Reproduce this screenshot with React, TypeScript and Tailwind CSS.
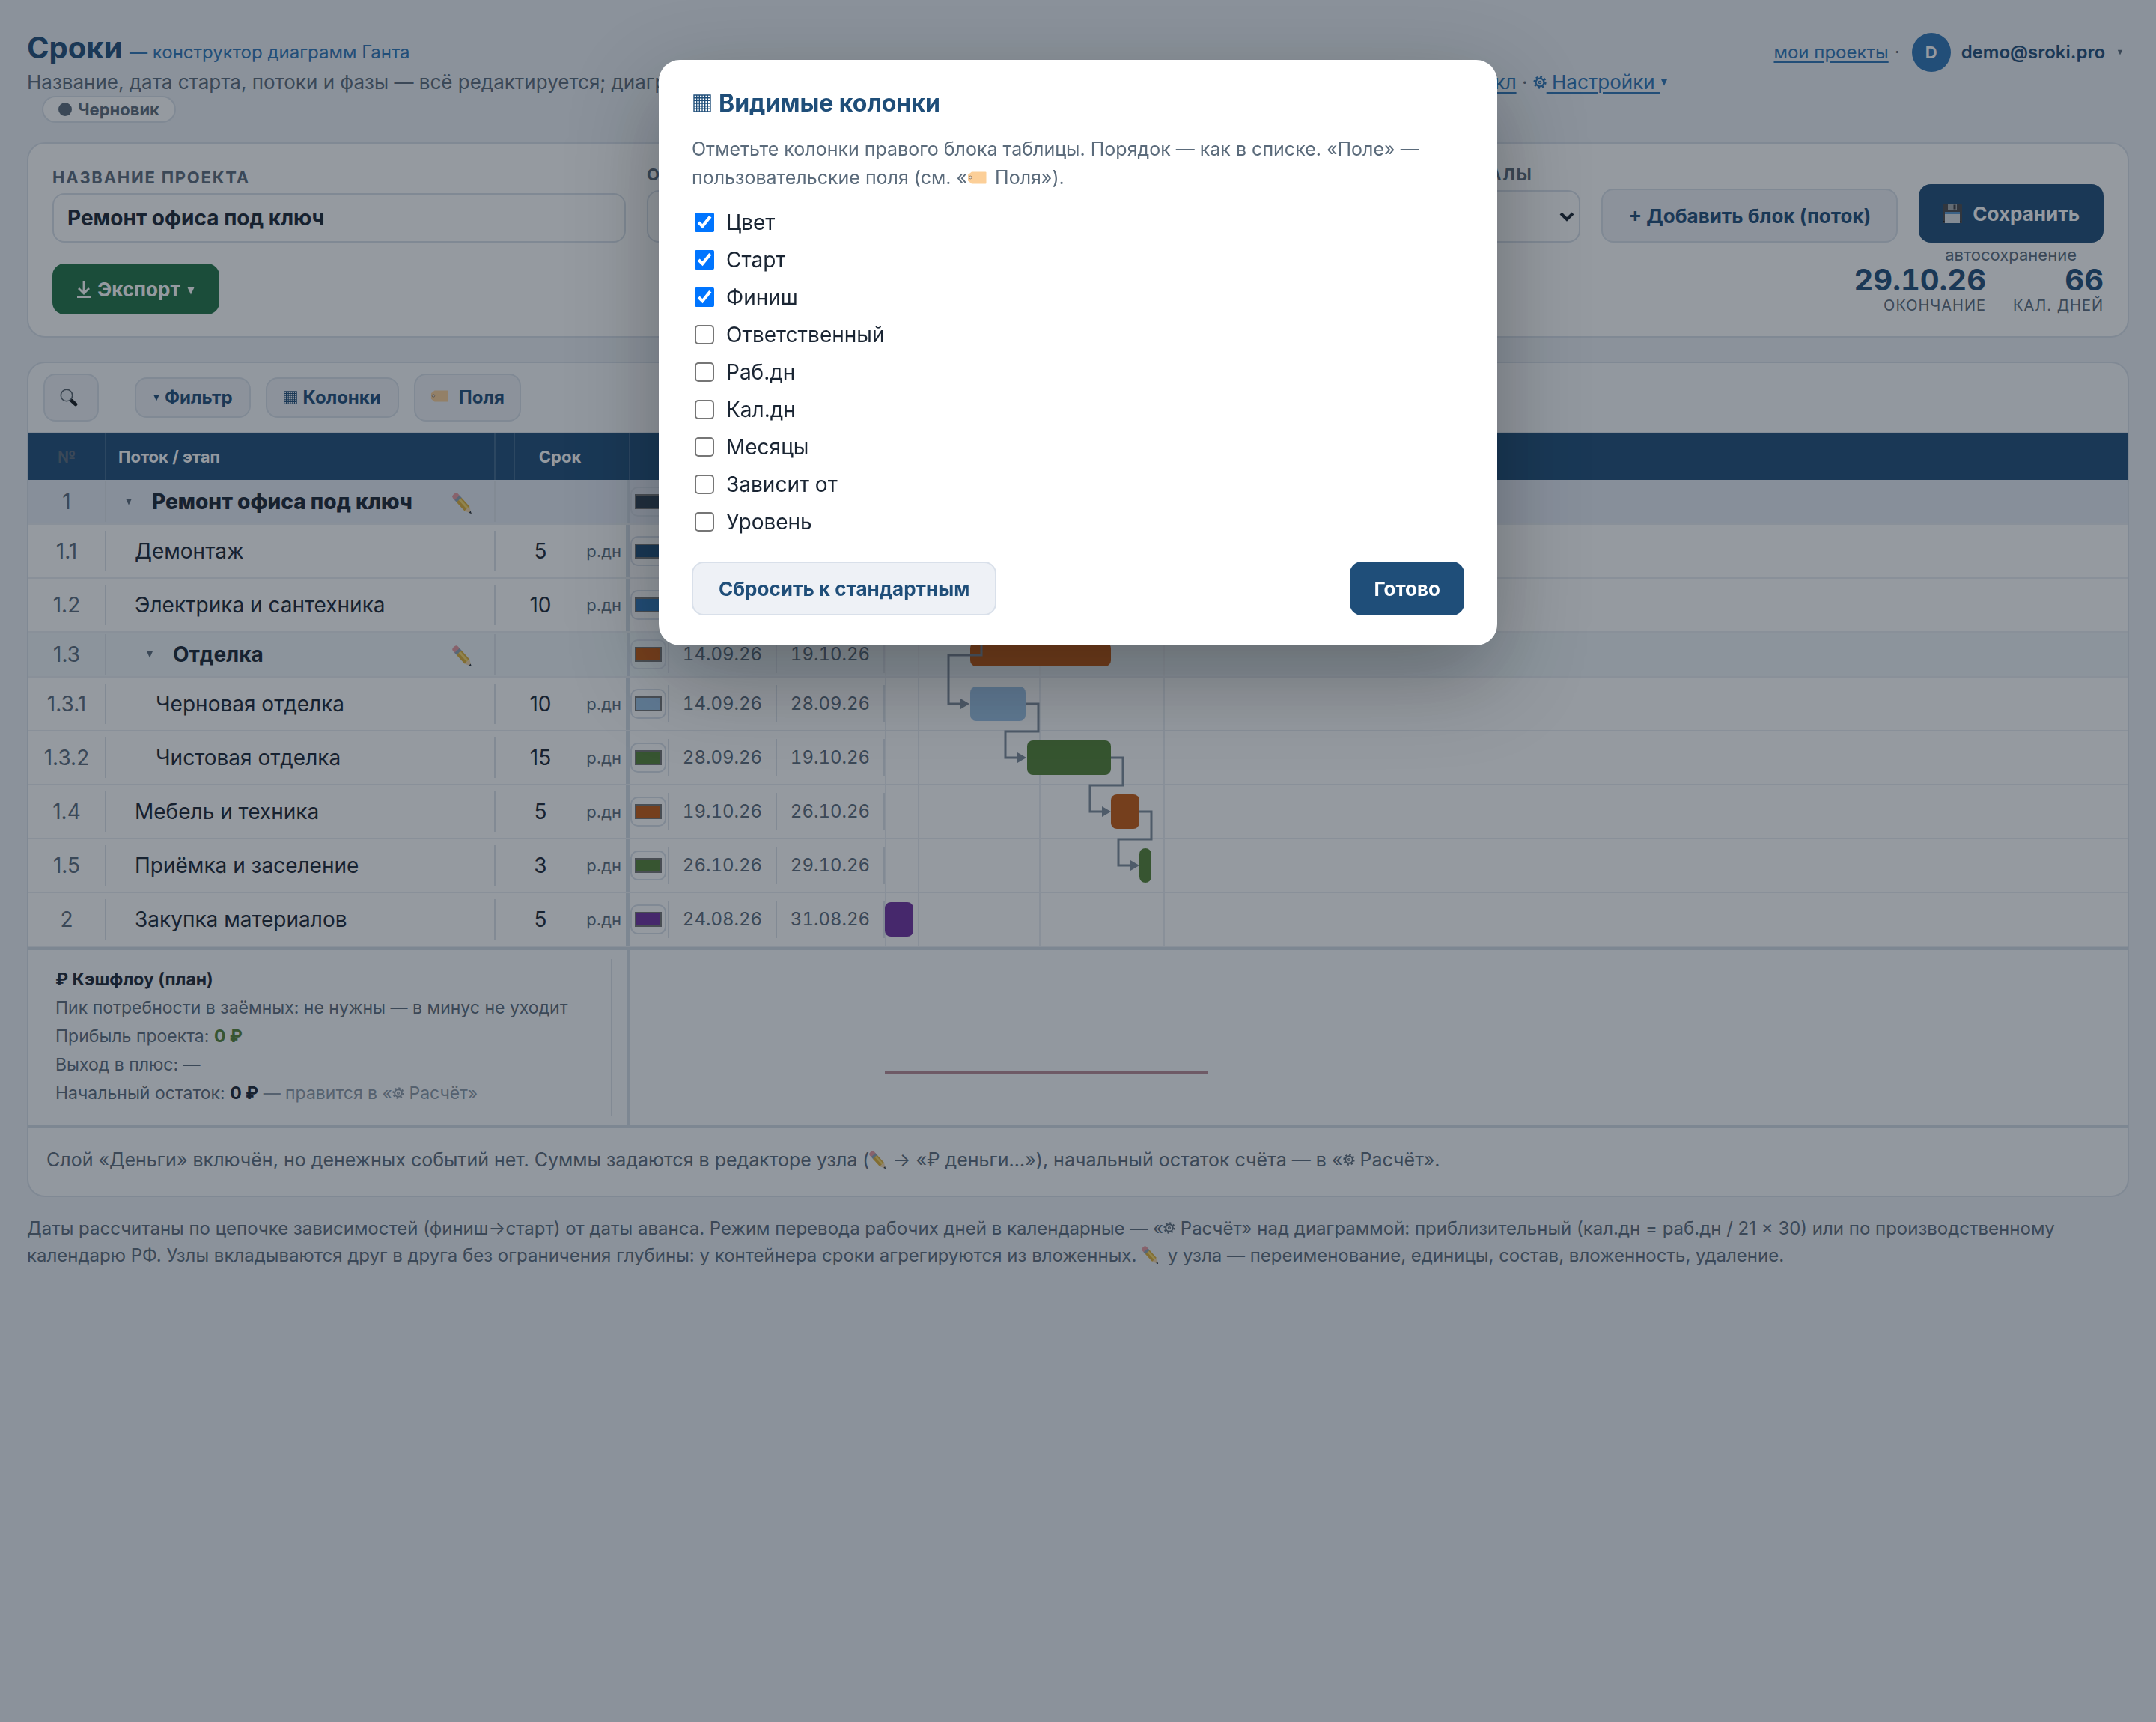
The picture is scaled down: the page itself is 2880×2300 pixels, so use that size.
import React, { useState } from 'react';

interface Task {
  num: string;
  name: string;
  level: number;
  group?: boolean;
  days?: number;
  color: string;
  start: string;
  finish: string;
  from: number;
  width: number;
}

const TASKS: Task[] = [
  { num: '1', name: 'Ремонт офиса под ключ', level: 0, group: true, color: '#2c3e50', start: '24.08.26', finish: '29.10.26', from: 0, width: 357 },
  { num: '1.1', name: 'Демонтаж', level: 1, days: 5, color: '#1f4e79', start: '24.08.26', finish: '31.08.26', from: 0, width: 38 },
  { num: '1.2', name: 'Электрика и сантехника', level: 1, days: 10, color: '#2e75b6', start: '31.08.26', finish: '14.09.26', from: 38, width: 76 },
  { num: '1.3', name: 'Отделка', level: 1, group: true, color: '#c55a11', start: '14.09.26', finish: '19.10.26', from: 114, width: 188 },
  { num: '1.3.1', name: 'Черновая отделка', level: 2, days: 10, color: '#9dc3e6', start: '14.09.26', finish: '28.09.26', from: 114, width: 74 },
  { num: '1.3.2', name: 'Чистовая отделка', level: 2, days: 15, color: '#548235', start: '28.09.26', finish: '19.10.26', from: 190, width: 112 },
  { num: '1.4', name: 'Мебель и техника', level: 1, days: 5, color: '#c55a11', start: '19.10.26', finish: '26.10.26', from: 302, width: 38 },
  { num: '1.5', name: 'Приёмка и заселение', level: 1, days: 3, color: '#548235', start: '26.10.26', finish: '29.10.26', from: 340, width: 16 },
  { num: '2', name: 'Закупка материалов', level: 1, days: 5, color: '#7030a0', start: '24.08.26', finish: '31.08.26', from: 0, width: 38 },
];

const COLUMNS = ['Цвет', 'Старт', 'Финиш', 'Ответственный', 'Раб.дн', 'Кал.дн', 'Месяцы', 'Зависит от', 'Уровень'];

const Caret = ({ className }: { className?: string }) => (
  <svg className={`inline-block ${className}`} viewBox="0 0 10 10" fill="currentColor">
    <path d="M1 1h8L5 9.5z" />
  </svg>
);

const GridIcon = ({ className }: { className?: string }) => (
  <svg className={`inline-block ${className}`} viewBox="0 0 24 24" fill="none" stroke="currentColor" strokeWidth="1.4">
    <path d="M1 1h22v22H1zM4.7 1v22M8.3 1v22M12 1v22M15.7 1v22M19.3 1v22M1 4.7h22M1 8.3h22M1 12h22M1 15.7h22M1 19.3h22" />
  </svg>
);

const GearIcon = ({ className }: { className?: string }) => (
  <svg className={`inline-block ${className}`} viewBox="0 0 20 20" fill="none" stroke="currentColor">
    <circle cx="10" cy="10" r="6" strokeWidth="2.4" />
    <circle cx="10" cy="10" r="1.8" strokeWidth="1.6" />
    <circle cx="10" cy="10" r="8.2" strokeWidth="2.8" strokeDasharray="3 3.44" />
  </svg>
);

const TagIcon = ({ className }: { className?: string }) => (
  <svg className={`inline-block ${className}`} viewBox="0 0 26 17">
    <path d="M6 0.5h18.5a1 1 0 0 1 1 1v14a1 1 0 0 1-1 1H6L1 12.5v-8z" fill="#fccf98" />
    <circle cx="4.3" cy="8" r="1.9" fill="#e8e4e0" stroke="#a08060" strokeWidth="1" />
  </svg>
);

const PencilIcon = ({ className }: { className?: string }) => (
  <svg className={`inline-block ${className}`} viewBox="0 0 28 28">
    <g transform="translate(4.5 4.5) rotate(48)">
      <path d="M0 -4.5a3.5 4.5 0 0 0 0 9h4v-9z" fill="#e89aa0" />
      <path d="M3 -4.5h4.5v9H3z" fill="#8fa3b5" />
      <path d="M7 -4.5h16v9H7z" fill="#dcae38" />
      <path d="M7 -2.5h16v3H7z" fill="#f7d86a" />
      <path d="M23 -4.5L31.5 0 23 4.5z" fill="#f2d6ac" />
      <path d="M28.5 -1.6L32 0l-3.5 1.6z" fill="#2b3440" />
    </g>
  </svg>
);

const FloppyIcon = () => (
  <svg className="h-[26px] w-[26px]" viewBox="0 0 26 26">
    <path d="M0 0h24.5L26 1.5V26H0z" fill="#4a4a4e" />
    <path d="M7 0h12v9H7z" fill="#a4a9ae" />
    <path d="M14.5 1.5h3v6h-3z" fill="#3a3b40" />
    <path d="M3 11h20v15H3z" fill="#dfe3ea" />
    <path d="M3 11h20v3H3z" fill="#5c9ad2" />
    <path d="M1 23h1.5v2H1zM23.5 23H25v2h-1.5z" fill="#1c1c20" />
  </svg>
);

const SearchIcon = () => (
  <svg className="h-6 w-6" viewBox="0 0 24 24">
    <path d="M15 15.5l6 5.5" stroke="#14181d" strokeWidth="4.6" strokeLinecap="round" />
    <circle cx="9" cy="9" r="7.7" fill="#e6eaee" stroke="#55606b" strokeWidth="1.6" />
  </svg>
);

const DownloadIcon = () => (
  <svg className="h-6 w-5" viewBox="0 0 20 24" fill="none" stroke="currentColor" strokeWidth="2.8">
    <path d="M10 1v17M3 11l7 7 7-7M1 22.5h18" />
  </svg>
);

const softButton = 'flex items-center border-2 border-[#d9e0ea] bg-[#eef1f6] font-bold text-[#1f4e79]';
const link = 'text-[#2e75b6] underline underline-offset-4';

const Header = () => (
  <header className="flex items-start justify-between">
    <div>
      <h1 className="text-[40px] leading-[48px] font-bold text-[#1f4e79]">
        Сроки <span className="text-[24px] leading-none font-normal text-[#2e75b6]">— конструктор диаграмм Ганта</span>
      </h1>
      <div className="mt-1 flex w-[2192px] justify-between text-[26px] leading-9 whitespace-nowrap text-[#5b6b7b]">
        <span>Название, дата старта, потоки и фазы — всё редактируется; диаграмма строится сама.</span>
        <span>
          <a href="#cycle" className={link}>цикл</a> ·{' '}
          <a href="#settings" className={link}>
            <GearIcon className="mb-1 h-[18px] w-[18px]" /> Настройки <Caret className="mb-1 h-2.5 w-2.5" />
          </a>
        </span>
      </div>
      <div className="ml-5 flex h-9 w-fit items-center gap-2 rounded-full border-2 border-[#d9e0ea] bg-white px-5 text-[22px] font-bold text-[#5b6b7b]">
        <span className="h-[18px] w-[18px] rounded-full bg-[#5b6b7b]" />
        Черновик
      </div>
    </div>
    <div className="mt-1 flex h-[52px] items-center text-[24px]">
      <a href="#projects" className={link}>мои проекты</a>
      <span className="mx-2 text-[#5b6b7b]">·</span>
      <button className="flex items-center font-semibold text-[#1f4e79]">
        <span className="mr-3.5 ml-2 flex h-[52px] w-[52px] items-center justify-center rounded-full bg-[#2e75b6] text-[22px] font-bold text-white">D</span>
        demo@sroki.pro
        <Caret className="mr-2 ml-4 h-2 w-2 text-[#5b6b7b]" />
      </button>
    </div>
  </header>
);

const labelText = 'text-[22px] leading-[26px] font-bold tracking-[0.08em] text-[#5b6b7b] uppercase';

const ProjectCard = () => (
  <section className="mt-[26px] rounded-3xl border-2 border-[#d9e0ea] bg-white px-8 pt-7 pb-[27px]">
    <div className="flex items-end gap-7">
      <label className="flex w-[766px] flex-col gap-2">
        <span className={labelText}>Название проекта</span>
        <input
          defaultValue="Ремонт офиса под ключ"
          className="h-[66px] rounded-2xl border-2 border-[#d9e0ea] px-[18px] text-[28px] font-bold text-[#1a2533]"
        />
      </label>
      <label className="flex flex-1 flex-col gap-2">
        <span className={labelText}>Отсчёт</span>
        <input defaultValue="24.08.2026" className="h-[70px] rounded-2xl border-2 border-[#d9e0ea] px-5 text-[28px] text-[#1a2533]" />
      </label>
      <label className="flex w-[300px] flex-col gap-2">
        <span className={labelText}>Масштаб шкалы</span>
        <span className="relative block">
          <select className="h-[70px] w-full appearance-none rounded-2xl border-2 border-[#d9e0ea] bg-white px-5 text-[28px] text-[#1a2533]">
            <option>Месяцы</option>
          </select>
          <svg className="pointer-events-none absolute top-7 right-2 h-4 w-5" viewBox="0 0 20 16" fill="none" stroke="#1a2533" strokeWidth="4">
            <path d="M2 3l8 8 8-8" />
          </svg>
        </span>
      </label>
      <button className={`${softButton} h-[72px] rounded-2xl px-[34px] text-[26px]`}>+ Добавить блок (поток)</button>
      <button className="flex h-[78px] items-center gap-3.5 rounded-2xl bg-[#1f4e79] px-8 text-[26px] font-bold text-white">
        <FloppyIcon />
        Сохранить
      </button>
    </div>
    <div className="flex items-start justify-between">
      <button className="mt-7 flex h-[68px] items-center gap-2 rounded-2xl bg-[#217346] px-8 text-[26px] font-bold text-white">
        <DownloadIcon />
        Экспорт
        <Caret className="mt-1 h-3 w-3" />
      </button>
      <div className="flex flex-col items-end">
        <span className="mt-0.5 mr-9 text-[22px] leading-7 text-[#5b6b7b]">автосохранение</span>
        <dl className="flex gap-9 text-right">
          <div className="flex flex-col-reverse">
            <dt className="text-[20px] leading-7 tracking-wider text-[#5b6b7b] uppercase">Окончание</dt>
            <dd className="text-[40px] leading-10 font-bold text-[#1f4e79] tabular-nums">29.10.26</dd>
          </div>
          <div className="flex flex-col-reverse">
            <dt className="text-[20px] leading-7 tracking-wider text-[#5b6b7b] uppercase">Кал. дней</dt>
            <dd className="text-[40px] leading-10 font-bold text-[#1f4e79] tabular-nums">66</dd>
          </div>
        </dl>
      </div>
    </div>
  </section>
);

const Toolbar = () => (
  <div className="flex items-center border-b-2 border-[#e3e9f0] px-5 py-3.5 text-[24px]">
    <button aria-label="Поиск" className={`${softButton} h-16 w-[74px] rounded-2xl pl-5`}>
      <SearchIcon />
    </button>
    <div className="ml-12 flex items-center gap-5">
      <button className={`${softButton} h-[54px] gap-1.5 rounded-2xl px-[22px]`}>
        <Caret className="h-2.5 w-2.5" />
        Фильтр
      </button>
      <button className={`${softButton} h-[54px] gap-2 rounded-2xl px-[22px]`}>
        <GridIcon className="h-[18px] w-[18px]" />
        Колонки
      </button>
      <button className={`${softButton} h-16 gap-3.5 rounded-2xl px-5`}>
        <TagIcon className="mb-1 h-4 w-6" />
        Поля
      </button>
    </div>
  </div>
);

const NAME_INDENT = ['pl-[17px]', 'pl-[38px]', 'pl-[66px]'];
const GROUP_INDENT = ['pl-[25px]', 'pl-[53px]'];

const TaskRow = ({ task }: { task: Task }) => {
  const height = task.group ? 'h-[58px]' : 'h-[70px]';
  const bg = task.num === '1' ? 'bg-[#e6ebf5]' : task.group ? 'bg-[#eef5f8]' : 'bg-white';
  const cell = 'border-b-2 border-[#e9edf2] p-0';
  const rule = 'border-r-2 border-[#dce2ea]';
  return (
    <tr className={bg}>
      <td className={cell}>
        <div className={`${height} flex items-center`}>
          <div className={`${rule} flex h-[54px] flex-1 items-center justify-center text-[28px] text-[#5b6b7b]`}>{task.num}</div>
        </div>
      </td>
      <td className={cell}>
        <div className={`${height} flex items-center`}>
          <div className={`${rule} flex h-[54px] flex-1 items-center justify-between pr-7 text-[28px] text-[#1a2533] ${task.group ? GROUP_INDENT[task.level] : NAME_INDENT[task.level]}`}>
            {task.group ? (
              <>
                <button className={`flex items-center gap-[26px] ${task.level === 0 ? 'font-extrabold' : 'font-bold'}`}>
                  <Caret className="h-2.5 w-2.5 text-[#5b6b7b]" />
                  {task.name}
                </button>
                <button aria-label="Изменить">
                  <PencilIcon className="h-7 w-7" />
                </button>
              </>
            ) : (
              task.name
            )}
          </div>
        </div>
      </td>
      <td className={cell} />
      <td className={cell}>
        <div className={`${height} flex items-center ${task.group ? 'border-r-4' : 'border-r-[6px]'} border-[#d3dce6]`}>
          {!task.group && (
            <>
              <span className="w-[68px] text-center text-[28px] text-[#1a2533]">{task.days}</span>
              <span className="flex-1 pr-1.5 text-right text-[22px] text-[#5b6b7b]">р.дн</span>
            </>
          )}
        </div>
      </td>
      <td className={cell}>
        <div className={`${height} flex items-center`}>
          <div className={`${rule} flex h-[50px] flex-1 items-center`}>
            <input
              type="color"
              aria-label={`Цвет: ${task.name}`}
              defaultValue={task.color}
              className="h-10 w-12 rounded-[10px] border-2 border-[#d9e0ea] px-1 py-2 [&::-webkit-color-swatch]:rounded-none [&::-webkit-color-swatch]:border-2 [&::-webkit-color-swatch]:border-[#767676] [&::-webkit-color-swatch-wrapper]:p-0"
            />
          </div>
        </div>
      </td>
      {[task.start, task.finish].map((date, i) => (
        <td key={i} className={cell}>
          <div className={`${height} flex items-center`}>
            <div className={`${rule} flex h-[50px] flex-1 items-center justify-center text-[24px] text-[#5b6b7b] tabular-nums`}>{date}</div>
          </div>
        </td>
      ))}
      <td className={cell}>
        <div className={`${height} relative`}>
          <svg className="h-full w-[480px]" stroke="#e9edf2" strokeWidth="2">
            <path d="M1 0v72M45 0v72M207 0v72M373 0v72" />
          </svg>
          <div
            className={`absolute rounded-lg ${task.group ? 'top-[13px] h-8' : 'top-3 h-[46px]'}`}
            style={{ left: task.from, width: task.width, background: task.color }}
          />
        </div>
      </td>
    </tr>
  );
};

// Dependency arrows, drawn over the chart column; y = 0 is the first task row
const Links = () => (
  <svg className="pointer-events-none absolute top-[62px] left-[1144px] h-[624px] w-[480px]" fill="none">
    <g stroke="#7f8c9b" strokeWidth="3">
      <path d="M114 168h15v66H85v65h19" />
      <path d="M188 299h17v37h-44v35h19" />
      <path d="M302 371h16v37h-44v35h19" />
      <path d="M340 443h16v37h-44v35h19" />
    </g>
    <g fill="#7f8c9b">
      <path d="M101 292v14l12-7zM177 364v14l12-7zM290 436v14l12-7zM328 508v14l12-7z" />
    </g>
  </svg>
);

const Cashflow = () => (
  <div className="flex border-y-4 border-[#d3dce6] bg-[#fafbfd]">
    <div className="w-[804px] border-r-4 border-[#d3dce6] py-3">
      <div className="mr-5 h-[210px] border-r-2 border-[#dce2ea] pt-2 pl-9 text-[23px] leading-[38px] text-[#5b6b7b]">
        <p className="font-bold text-[#1a2533]">₽ Кэшфлоу (план)</p>
        <p>Пик потребности в заёмных: не нужны — в минус не уходит</p>
        <p>Прибыль проекта: <b className="text-[#548235]">0 ₽</b></p>
        <p>Выход в плюс: —</p>
        <p>
          Начальный остаток: <b className="text-[#1a2533]">0 ₽</b>{' '}
          <span className="text-[#8b98a6]">— правится в «<GearIcon className="mb-1 h-4 w-4" /> Расчёт»</span>
        </p>
      </div>
    </div>
    <svg className="ml-[340px] h-[234px] w-[440px]" fill="none">
      <path d="M0 163h432" stroke="#b98a96" strokeWidth="4" />
    </svg>
  </div>
);

const Chart = () => (
  <section className="mt-8 overflow-hidden rounded-3xl border-2 border-[#d9e0ea] bg-[#fafbfd]">
    <Toolbar />
    <div className="relative">
      <table className="w-full table-fixed border-separate border-spacing-0">
        <colgroup>
          <col className="w-[104px]" />
          <col className="w-[520px]" />
          <col className="w-[26px]" />
          <col className="w-[154px]" />
          <col className="w-[52px]" />
          <col className="w-36" />
          <col className="w-36" />
          <col />
        </colgroup>
        <thead>
          <tr className="h-[62px] bg-[#1f4e79] text-[22px] font-bold text-white">
            <th className="border-r-2 border-white/15 text-[#5b6b7b]">№</th>
            <th className="border-r-2 border-white/15 pl-4 text-left">Поток / этап</th>
            <th className="border-r-2 border-white/15" />
            <th className="border-r-2 border-white/15 pr-8">Срок</th>
            <th />
            <th>Старт</th>
            <th>Финиш</th>
            <th />
          </tr>
        </thead>
        <tbody>
          {TASKS.map((task) => (
            <TaskRow key={task.num} task={task} />
          ))}
        </tbody>
      </table>
      <Links />
    </div>
    <Cashflow />
    <p className="px-6 pt-6 pb-[30px] text-[25px] leading-9 text-[#5b6b7b]">
      Слой «Деньги» включён, но денежных событий нет. Суммы задаются в редакторе узла (
      <PencilIcon className="mb-1 h-6 w-6" /> → «₽ деньги…»), начальный остаток счёта — в «
      <GearIcon className="mb-1 h-4 w-4" /> Расчёт».
    </p>
  </section>
);

const ColumnsDialog = () => {
  const [visible, setVisible] = useState<string[]>(COLUMNS.slice(0, 3));
  const toggle = (name: string) =>
    setVisible(visible.includes(name) ? visible.filter((c) => c !== name) : [...visible, name]);

  return (
    <div className="fixed inset-0 flex items-start justify-center bg-[rgba(20,30,45,0.45)] pt-20">
      <div role="dialog" aria-label="Видимые колонки" className="w-[1120px] rounded-[28px] bg-white px-11 py-10 shadow-[0_40px_120px_rgba(0,0,0,0.3)]">
        <h2 className="flex items-center gap-2.5 text-[32px] leading-9 font-bold text-[#1f4e79]">
          <GridIcon className="ml-0.5 h-6 w-6" />
          Видимые колонки
        </h2>
        <p className="mt-6 text-[25px] leading-[38px] text-[#5b6b7b]">
          Отметьте колонки правого блока таблицы. Порядок — как в списке. «Поле» — пользовательские поля (см. «
          <TagIcon className="mr-1 mb-1 h-[17px] w-[26px]" /> Поля»).
        </p>
        <div className="mt-4">
          {COLUMNS.map((name) => (
            <label key={name} className="flex h-[50px] items-center gap-4 pl-1 text-[28px] text-[#1a2533]">
              <input
                type="checkbox"
                className="h-[26px] w-[26px] appearance-none rounded-[5px] border-2 border-[#767676] checked:appearance-auto"
                checked={visible.includes(name)}
                onChange={() => toggle(name)}
              />
              {name}
            </label>
          ))}
        </div>
        <div className="mt-7 flex justify-between text-[26px] font-bold">
          <button onClick={() => setVisible(COLUMNS.slice(0, 3))} className={`${softButton} h-[72px] rounded-2xl px-[34px]`}>
            Сбросить к стандартным
          </button>
          <button className="h-[72px] rounded-2xl bg-[#1f4e79] px-8 text-white">Готово</button>
        </div>
      </div>
    </div>
  );
};

export default function App() {
  return (
    <div className="min-h-screen bg-[#edf1f6] px-9 pt-10 pb-12 font-['Inter','Liberation_Sans',sans-serif]">
      <Header />
      <ProjectCard />
      <Chart />
      <p className="mt-6 text-[24px] leading-9 text-[#5b6b7b]">
        Даты рассчитаны по цепочке зависимостей (финиш→старт) от даты аванса. Режим перевода рабочих дней в календарные — «
        <GearIcon className="mb-1 h-4 w-4" /> Расчёт» над диаграммой: приблизительный (кал.дн = раб.дн / 21 × 30) или по
        производственному календарю РФ. Узлы вкладываются друг в друга без ограничения глубины: у контейнера сроки агрегируются
        из вложенных. <PencilIcon className="mr-1 mb-1 h-6 w-6" /> у узла — переименование, единицы, состав, вложенность, удаление.
      </p>
      <ColumnsDialog />
    </div>
  );
}
